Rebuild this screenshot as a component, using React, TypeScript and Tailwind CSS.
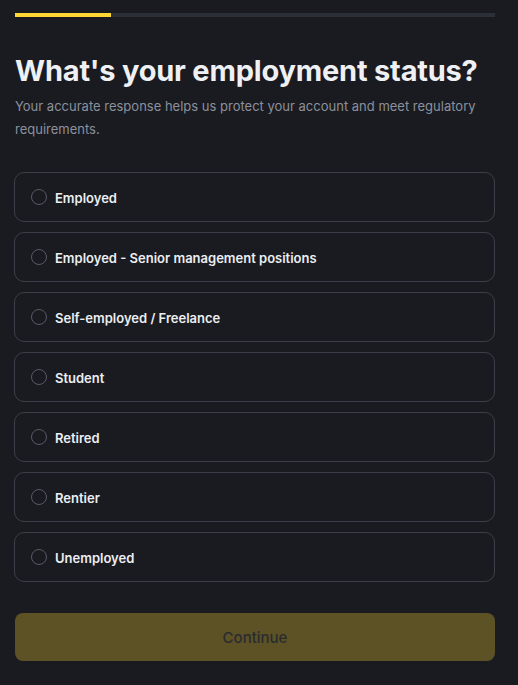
const options = [
  'Employed',
  'Employed - Senior management positions',
  'Self-employed / Freelance',
  'Student',
  'Retired',
  'Rentier',
  'Unemployed',
];

export default function App() {
  return (
    <div
      className="min-h-[685px] w-full bg-[#1a1b20] px-[15px] pt-[13px]"
      style={{ fontFamily: 'Inter, "Liberation Sans", sans-serif' }}
    >
      <div className="w-[480px]">
        {/* progress */}
        <div className="flex h-[4px] w-full bg-[#2b2f38]">
          <div className="h-full w-[96px] bg-[#fdd835]" />
        </div>

        <h1 className="mt-[34px] text-[29px] font-bold leading-[40px] tracking-[-0.2px] text-[#eef0f4]">
          What's your employment status?
        </h1>
        <p className="mt-[4px] text-[13px] leading-[23px] text-[#8b909c]">
          Your accurate response helps us protect your account and meet regulatory requirements.
        </p>

        <div className="mt-[31px] flex flex-col gap-[10px]">
          {options.map((o) => (
            <label
              key={o}
              className="-ml-px flex h-[50px] w-[481px] items-center gap-[8px] rounded-[10px] border border-[#3b3f4a] pl-[16px]"
            >
              <span className="h-[16px] w-[16px] rounded-full border border-[#555a66]" />
              <span className="pt-[3px] text-[13px] font-semibold text-[#eceef2]">{o}</span>
            </label>
          ))}
        </div>

        <button className="mt-[31px] flex h-[48px] w-full items-center justify-center rounded-[8px] bg-[#5c5226] pt-[3px] text-[15px] font-medium text-[#2a2b2e]">
          Continue
        </button>
      </div>
    </div>
  );
}
